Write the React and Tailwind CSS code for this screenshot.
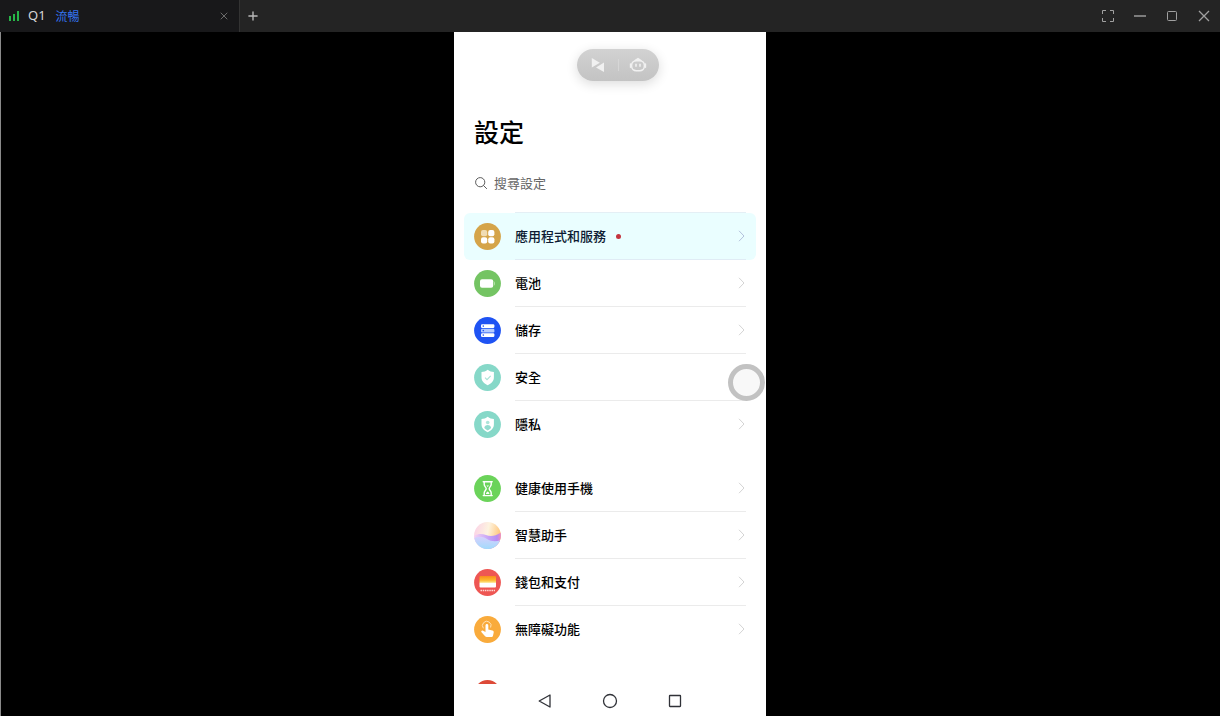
import { useState } from 'react';
import clsx from 'clsx';
import { X, Plus } from 'lucide-react';

function AppsIcon() {
  return (
    <svg viewBox="0 0 27 27" className="h-[27px] w-[27px] shrink-0" aria-hidden="true">
      <circle cx="13.5" cy="13.5" r="13.4" fill="#d5a449" />
      <rect x="7" y="7" width="6.2" height="6.2" rx="2" fill="#f0dcb4" />
      <rect x="14.2" y="7" width="6.2" height="6.2" rx="2" fill="#fff" />
      <rect x="7" y="14.2" width="6.2" height="6.2" rx="2" fill="#fff" />
      <rect x="14.2" y="14.2" width="6.2" height="6.2" rx="2" fill="#fff" />
    </svg>
  );
}

function BatteryIcon() {
  return (
    <svg viewBox="0 0 27 27" className="h-[27px] w-[27px] shrink-0" aria-hidden="true">
      <circle cx="13.5" cy="13.5" r="13.4" fill="#74c463" />
      <rect x="6" y="9.2" width="13.2" height="8.6" rx="2" fill="#fff" />
      <path d="M20 11.5c1.3.3 1.3 3.7 0 4z" fill="#b5e3a8" />
    </svg>
  );
}

function StorageIcon() {
  return (
    <svg viewBox="0 0 27 27" className="h-[27px] w-[27px] shrink-0" aria-hidden="true">
      <circle cx="13.5" cy="13.5" r="13.4" fill="#1f53f3" />
      <rect x="7" y="7.3" width="13.4" height="3.6" rx="1.2" fill="#fff" />
      <rect x="7" y="11.8" width="13.4" height="3.6" rx="1.2" fill="#b4cbff" />
      <rect x="7" y="16.3" width="13.4" height="3.6" rx="1.2" fill="#fff" />
      <g fill="#1f53f3">
        <circle cx="9.3" cy="9.1" r=".8" />
        <circle cx="9.3" cy="13.6" r=".8" />
        <circle cx="9.3" cy="18.1" r=".8" />
      </g>
    </svg>
  );
}

function SecurityIcon() {
  return (
    <svg viewBox="0 0 27 27" className="h-[27px] w-[27px] shrink-0" aria-hidden="true">
      <circle cx="13.5" cy="13.5" r="13.4" fill="#86d8c8" />
      <path d="M13.7 5.8c2 1.5 3.8 2.1 6.2 2.3v5.2c0 4-2.5 6.3-6.2 8-3.700-1.700-6.200-4-6.200-8V8.100c2.400-.2 4.200-.8 6.200-2.300z" fill="#fff" />
      <path d="M11 13.600l2 2 3.700-3.800" fill="none" stroke="#a9e2d6" strokeWidth="1.1" />
    </svg>
  );
}

function PrivacyIcon() {
  return (
    <svg viewBox="0 0 27 27" className="h-[27px] w-[27px] shrink-0" aria-hidden="true">
      <circle cx="13.5" cy="13.5" r="13.4" fill="#86d8c8" />
      <path d="M13.7 5.8c2 1.5 3.8 2.1 6.2 2.3v5.2c0 4-2.5 6.3-6.2 8-3.700-1.700-6.200-4-6.200-8V8.100c2.400-.2 4.200-.8 6.200-2.300z" fill="#fff" />
      <circle cx="13.7" cy="11.5" r="1.8" fill="#aee5da" />
      <path d="M10.300 17c0-4 6.800-4 6.800 0-.8 1-2 1.800-3.400 2.500-1.400-.7-2.600-1.500-3.400-2.500z" fill="#94dccf" />
    </svg>
  );
}

function HourglassIcon() {
  return (
    <svg viewBox="0 0 27 27" className="h-[27px] w-[27px] shrink-0" aria-hidden="true">
      <circle cx="13.5" cy="13.5" r="13.4" fill="#6bd35a" />
      <g fill="none" stroke="#fff" strokeWidth="1.4" strokeLinecap="round" strokeLinejoin="round">
        <path d="M9.200 6.800h9M9.200 20.600h9" />
        <path d="M10.200 7v2.500c0 1.800 2 2.800 2 4.200s-2 2.400-2 4.200v2.500M17.200 7v2.500c0 1.800-2 2.800-2 4.200s2 2.400 2 4.200v2.500" />
      </g>
      <path d="M12.400 10.500h2.600l-1.300 1.500zM12 19c0-1.500.9-2 1.700-2.500.8.500 1.700 1 1.700 2.500z" fill="#fff" />
    </svg>
  );
}

function AssistantIcon() {
  return (
    <svg viewBox="0 0 27 27" className="h-[27px] w-[27px] shrink-0" aria-hidden="true">
      <defs>
        <linearGradient id="sky" x1="0" y1=".3" x2="1" y2=".5">
          <stop offset="0%" stopColor="#fbd3e6" />
          <stop offset="50%" stopColor="#fdf3e0" />
          <stop offset="100%" stopColor="#ffc272" />
        </linearGradient>
        <linearGradient id="wave" x1="0" y1="0" x2="1" y2="0">
          <stop offset="0%" stopColor="#f6d3f3" />
          <stop offset="55%" stopColor="#c3a2f7" />
          <stop offset="85%" stopColor="#b78cf3" />
          <stop offset="100%" stopColor="#f08cc0" />
        </linearGradient>
        <linearGradient id="sea" x1="0" y1="0" x2="0" y2="1">
          <stop offset="0%" stopColor="#d6d0fd" />
          <stop offset="100%" stopColor="#9cdcfb" />
        </linearGradient>
        <clipPath id="orb"><circle cx="13.5" cy="13.5" r="13.4" /></clipPath>
      </defs>
      <g clipPath="url(#orb)">
        <rect width="27" height="27" fill="url(#sky)" />
        <path d="M0 14c4-2.500 8-2.500 12-1s9 1.500 15-2.500v17H0z" fill="url(#wave)" />
        <path d="M0 16c5-2 9-1.500 13 1s9 3 14 1v10H0z" fill="url(#sea)" />
      </g>
    </svg>
  );
}

function WalletIcon() {
  return (
    <svg viewBox="0 0 27 27" className="h-[27px] w-[27px] shrink-0" aria-hidden="true">
      <defs>
        <linearGradient id="cards" x1="0" y1="0" x2="0" y2="1">
          <stop offset="0%" stopColor="#f98a1e" />
          <stop offset="35%" stopColor="#fdb62c" />
          <stop offset="55%" stopColor="#fde07a" />
          <stop offset="62%" stopColor="#fff" />
        </linearGradient>
      </defs>
      <circle cx="13.5" cy="13.5" r="13.4" fill="#ee5653" />
      <rect x="5.5" y="7" width="16.5" height="11.5" rx="1" fill="url(#cards)" />
      <path d="M6.500 21.500h14.500" stroke="#ffd9d4" strokeWidth="1.600" strokeDasharray="1.500 .7" fill="none" />
    </svg>
  );
}

function TouchIcon() {
  return (
    <svg viewBox="0 0 27 27" className="h-[27px] w-[27px] shrink-0" aria-hidden="true">
      <circle cx="13.5" cy="13.5" r="13.4" fill="#f9ab3c" />
      <path d="M9.400 12.300a4.300 4.300 0 1 1 7.200-.8" fill="none" stroke="#ffe2b5" strokeWidth="1" />
      <path d="M11.500 9.500c0-2 2.800-2 2.800 0v4l4 .9c1.200.3 1.600 1.100 1.400 2.200l-.7 3.200c-.2.900-.8 1.300-1.600 1.300h-4.600c-.7 0-1.300-.3-1.700-.8l-3.600-4c-.9-1.100.4-2.200 1.600-1.600l2.400 1.200z" fill="#fff" />
    </svg>
  );
}

function UserIcon() {
  return (
    <svg viewBox="0 0 27 27" className="h-[27px] w-[27px] shrink-0" aria-hidden="true">
      <circle cx="13.5" cy="13.5" r="13.4" fill="#dd4a38" />
    </svg>
  );
}

const GROUPS = [
  [
    { label: '應用程式和服務', icon: AppsIcon, badge: true },
    { label: '電池', icon: BatteryIcon },
    { label: '儲存', icon: StorageIcon },
    { label: '安全', icon: SecurityIcon },
    { label: '隱私', icon: PrivacyIcon },
  ],
  [
    { label: '健康使用手機', icon: HourglassIcon },
    { label: '智慧助手', icon: AssistantIcon },
    { label: '錢包和支付', icon: WalletIcon },
    { label: '無障礙功能', icon: TouchIcon },
  ],
];

function TitleBar() {
  return (
    <header className="flex h-8 shrink-0 items-stretch justify-between bg-[#242424] text-[#a0a0a0]">
      <div className="flex">
        <div className="flex w-60 items-center border-r border-[#333] bg-[#18181a] pr-[7px] pl-2">
          <svg viewBox="0 0 12 12" className="h-3 w-3" fill="#27b648" aria-hidden="true">
            <rect x="1" y="6" width="2" height="5" />
            <rect x="5" y="4" width="2" height="7" />
            <rect x="9" y="1" width="2" height="10" />
          </svg>
          <span className="ml-2 text-[13px] text-[#d6d6d6]">Q1</span>
          <span className="ml-2.5 font-['Noto_Sans_CJK_TC',sans-serif] text-xs text-[#3474f0]">流暢</span>
          <button className="ml-auto flex h-4 w-4 items-center justify-center text-[#6b6b6b]" aria-label="Close tab">
            <X className="h-3 w-3" strokeWidth={2} />
          </button>
        </div>
        <button className="flex w-[25px] items-center justify-center text-[#b8b8b8]" aria-label="New tab">
          <Plus className="h-[14px] w-[14px]" strokeWidth={2.4} />
        </button>
      </div>
      <div className="flex items-center">
        <button className="flex h-8 w-8 items-center justify-center" aria-label="Fullscreen">
          <svg viewBox="0 0 12 12" className="h-3 w-3" fill="none" stroke="currentColor">
            <path d="M.5 4V.5H4M8 .5h3.500V4M11.500 8v3.500H8M4 11.500H.5V8" />
          </svg>
        </button>
        <button className="flex h-8 w-8 items-center justify-center" aria-label="Minimize">
          <svg viewBox="0 0 12 12" className="h-3 w-3" fill="#7c7c7c"><rect y="5" width="12" height="2" /></svg>
        </button>
        <button className="flex h-8 w-8 items-center justify-center" aria-label="Maximize">
          <svg viewBox="0 0 12 12" className="h-3 w-3" fill="none" stroke="currentColor">
            <rect x="1.5" y="1.5" width="9" height="9" rx="1" />
          </svg>
        </button>
        <button className="flex h-8 w-8 items-center justify-center" aria-label="Close">
          <svg viewBox="0 0 12 12" className="h-3 w-3" fill="none" stroke="currentColor" strokeWidth="1.3">
            <path d="M1 1l10 10M11 1L1 11" />
          </svg>
        </button>
      </div>
    </header>
  );
}

function AssistPill() {
  return (
    <div className="mt-[17px] ml-4 flex h-8 w-[82px] shrink-0 items-center justify-between self-center rounded-full bg-linear-to-b from-[#d2d2d2] to-[#c3c3c3] px-3 shadow-[0_3px_12px_rgba(0,0,0,0.14)]">
      <button className="flex w-[18px] justify-center" aria-label="Swap">
        <svg viewBox="0 0 14 14" className="h-[14px] w-[14px]" fill="#f1f1f1">
          <path d="M.8 0l8 4.800L.8 9.500zM13 4.500V14L5 9.500z" />
        </svg>
      </button>
      <span className="h-3 w-px bg-[#d6d6d6]" />
      <button className="flex w-[18px] justify-center" aria-label="Assistant">
        <svg viewBox="0 0 18 16" className="h-4 w-[18px]" fill="none" stroke="#f1f1f1">
          <path d="M5.500 3.800L9 1.600l3.500 2.200" strokeWidth="1.500" strokeLinejoin="round" />
          <rect x="2.600" y="3.700" width="12.800" height="10" rx="4.600" strokeWidth="1.500" />
          <path d="M1.500 7v3.200M16.500 7v3.200" strokeWidth="1.400" strokeLinecap="round" />
          <path d="M7 6.800v3M11 6.800v3" strokeWidth="1.600" />
        </svg>
      </button>
    </div>
  );
}

function SettingRow({ item, active, last, onSelect }) {
  const Icon = item.icon;
  return (
    <button
      onClick={onSelect}
      className={clsx('flex h-[47px] w-full items-center gap-[14px] rounded-md px-2.5 text-left', active && 'bg-[#eafeff]')}
    >
      <Icon />
      <span className={clsx('flex h-full flex-1 items-center border-b', last ? 'border-transparent' : active ? 'border-[#e0ecf5]' : 'border-[#ebebeb]')}>
        <span className={clsx('text-[13px] font-medium', active ? 'text-[#0d1b33]' : 'text-black')}>{item.label}</span>
        {item.badge && <span className="ml-2.5 h-[5px] w-[5px] rounded-full bg-[#c4353f]" />}
        <svg
          viewBox="0 0 8 12"
          className={clsx('ml-auto h-3 w-2', active ? 'text-[#b3c1dc]' : 'text-[#d4d4d4]')}
          fill="none"
          stroke="currentColor"
          aria-hidden="true"
        >
          <path d="M1 .8L6 6l-5 5.200" />
        </svg>
      </span>
    </button>
  );
}

function NavBar() {
  return (
    <nav className="flex h-8 shrink-0 items-center justify-center gap-[49px] bg-white pt-0.5">
      <button aria-label="Back">
        <svg viewBox="0 0 16 16" className="h-4 w-4" fill="none" stroke="#303238" strokeWidth="1.3" strokeLinejoin="round">
          <path d="M13 2v12L2.200 8z" />
        </svg>
      </button>
      <button aria-label="Home">
        <svg viewBox="0 0 16 16" className="h-4 w-4" fill="none" stroke="#303238" strokeWidth="1.3">
          <circle cx="8" cy="8" r="6.5" />
        </svg>
      </button>
      <button aria-label="Recent apps">
        <svg viewBox="0 0 16 16" className="h-4 w-4" fill="none" stroke="#303238" strokeWidth="1.3">
          <rect x="2.5" y="2.5" width="11" height="11" rx=".5" />
        </svg>
      </button>
    </nav>
  );
}

export default function App() {
  const [selected, setSelected] = useState('應用程式和服務');

  return (
    <div className="flex h-screen flex-col bg-black font-['Noto_Sans','Noto_Sans_CJK_TC',sans-serif]">
      <TitleBar />
      <main className="flex min-h-0 flex-1 justify-center border-l border-[#8a8a8a] pr-px">
        <div className="relative flex aspect-[312/684] h-full flex-col bg-white font-['Noto_Sans_CJK_TC',sans-serif]">
          <div className="flex min-h-0 flex-1 flex-col overflow-hidden px-2.5">
            <AssistPill />
            <h1 className="mt-8 shrink-0 px-2.5 text-[25px] leading-9 font-medium text-black">設定</h1>
            <label className="mt-[18px] flex h-8 shrink-0 items-center gap-1.5 px-2.5">
              <svg viewBox="0 0 14 14" className="h-[14px] w-[14px]" fill="none" stroke="#5c5c5c" aria-hidden="true">
                <circle cx="6.2" cy="6.2" r="4.6" />
                <path d="M9.600 9.600l3 3" strokeLinecap="round" />
              </svg>
              <input
                type="text"
                placeholder="搜尋設定"
                aria-label="搜尋設定"
                className="min-w-0 flex-1 text-[13px] outline-none placeholder:text-[#666]"
              />
            </label>
            <div className="mt-[13px] mr-2.5 ml-[51px] h-px shrink-0 bg-[#e4eff5]" />
            <div className="flex shrink-0 flex-col gap-[17px]">
              {GROUPS.map((items, g) => (
                <section key={g}>
                  {items.map((item, i) => (
                    <SettingRow
                      key={item.label}
                      item={item}
                      active={selected === item.label}
                      last={i === items.length - 1}
                      onSelect={() => setSelected(item.label)}
                    />
                  ))}
                </section>
              ))}
              <div className="flex h-[47px] items-center px-2.5"><UserIcon /></div>
            </div>
          </div>
          <NavBar />
          {/* floating assistive ball, docked to the right edge */}
          <button
            aria-label="Floating menu"
            className="absolute top-[332px] right-px h-[37px] w-[37px] rounded-full border-[5px] border-[#c2c2c2] bg-[#f8f8f8]"
          />
        </div>
      </main>
    </div>
  );
}
